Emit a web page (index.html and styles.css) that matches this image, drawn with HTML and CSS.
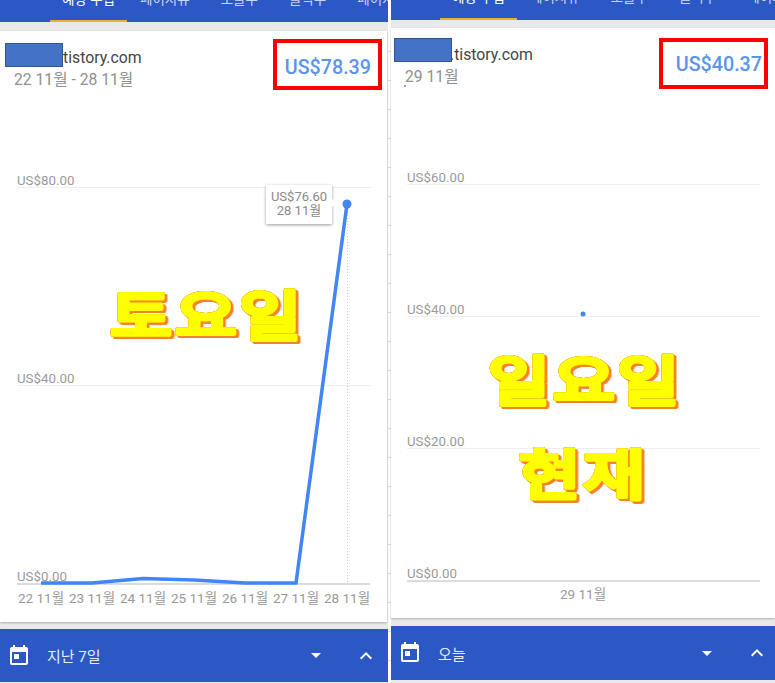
FILE: index.html
```html
<!DOCTYPE html>
<html lang="ko">
<head>
  <meta charset="UTF-8" />
  <meta name="viewport" content="width=device-width, initial-scale=1.0" />
  <title>예상 수입</title>
  <link rel="stylesheet" href="styles.css">
</head>
<body>
  <div class="screens">

    <section class="panel panel-left">
      <nav class="tabs">
        <span class="tab active">예상 수입</span>
        <span class="tab">페이지뷰</span>
        <span class="tab">노출수</span>
        <span class="tab">클릭수</span>
        <span class="tab">페이지 RPM</span>
      </nav>
      <div class="card">
        <header class="card-head">
          <div class="site">
            <div class="site-name"><span class="mask"></span><span class="domain">tistory.com</span></div>
            <div class="site-date">22 11월 - 28 11월</div>
          </div>
          <div class="amount">US$78.39</div>
        </header>
        <svg class="chart" width="387" height="591" viewBox="0 0 387 591">
          <g class="grid">
            <line x1="17" y1="156.5" x2="371" y2="156.5" />
            <line x1="17" y1="354.5" x2="371" y2="354.5" />
          </g>
          <line class="axis" x1="17" y1="553" x2="370" y2="553" />
          <line class="guide" x1="347.5" y1="175" x2="347.5" y2="552" />
          <text class="label" x="17" y="154">US$80.00</text>
          <text class="label" x="17" y="352">US$40.00</text>
          <text class="label" x="17" y="550">US$0.00</text>
          <polyline class="trend" points="41,552 92,552 143,547.5 194,549 245,552 296,552 347,173" />
          <circle class="dot" cx="347" cy="173" r="4.5" />
          <g class="dates">
            <text x="41" y="572">22 11월</text>
            <text x="92" y="572">23 11월</text>
            <text x="143" y="572">24 11월</text>
            <text x="194" y="572">25 11월</text>
            <text x="245" y="572">26 11월</text>
            <text x="296" y="572">27 11월</text>
            <text x="347" y="572">28 11월</text>
          </g>
          <text class="sticker" transform="translate(207 305) scale(1.25 1)">토요일</text>
        </svg>
        <div class="tooltip">US$76.60<br>28 11월</div>
      </div>
      <footer class="range">
        <svg class="cal" width="24" height="24" viewBox="0 0 24 24"><path d="M19 3h-1V1h-2v2H8V1H6v2H5c-1.11 0-1.99.9-1.99 2L3 19c0 1.1.89 2 2 2h14c1.1 0 2-.9 2-2V5c0-1.1-.9-2-2-2zm0 16H5V8h14v11zM7 10h5v5H7z" /></svg>
        <span class="range-text">지난 7일</span>
        <span class="caret"></span>
        <svg class="chev" width="24" height="24" viewBox="0 0 24 24"><path d="M7.4 15.4 12 10.8l4.6 4.6L18 14l-6-6-6 6z" /></svg>
      </footer>
    </section>

    <div class="gutter"></div>

    <section class="panel panel-right">
      <nav class="tabs">
        <span class="tab active">예상 수입</span>
        <span class="tab">페이지뷰</span>
        <span class="tab">노출수</span>
        <span class="tab">클릭수</span>
        <span class="tab">페이지 RPM</span>
      </nav>
      <div class="card">
        <header class="card-head">
          <div class="site">
            <div class="site-name"><span class="mask"></span><span class="domain">.tistory.com</span></div>
            <div class="site-date">29 11월</div>
          </div>
          <div class="amount">US$40.37</div>
        </header>
        <svg class="chart" width="384" height="590" viewBox="0 0 384 590">
          <g class="grid">
            <line x1="16" y1="156.5" x2="369" y2="156.5" />
            <line x1="16" y1="288.5" x2="369" y2="288.5" />
            <line x1="16" y1="420.5" x2="369" y2="420.5" />
          </g>
          <line class="axis" x1="16" y1="553" x2="369" y2="553" />
          <text class="label" x="16" y="154">US$60.00</text>
          <text class="label" x="16" y="286">US$40.00</text>
          <text class="label" x="16" y="418">US$20.00</text>
          <text class="label" x="16" y="550">US$0.00</text>
          <circle class="dot" cx="192" cy="286" r="2.5" />
          <circle class="dot" cx="14" cy="58" r="1" />
          <g class="dates">
            <text x="192" y="571">29 11월</text>
          </g>
          <text class="sticker" transform="translate(194 373) scale(1.25 1)">일요일</text>
          <text class="sticker" transform="translate(192 467) scale(1.25 1)">현재</text>
        </svg>
      </div>
      <footer class="range">
        <svg class="cal" width="24" height="24" viewBox="0 0 24 24"><path d="M19 3h-1V1h-2v2H8V1H6v2H5c-1.11 0-1.99.9-1.99 2L3 19c0 1.1.89 2 2 2h14c1.1 0 2-.9 2-2V5c0-1.1-.9-2-2-2zm0 16H5V8h14v11zM7 10h5v5H7z" /></svg>
        <span class="range-text">오늘</span>
        <span class="caret"></span>
        <svg class="chev" width="24" height="24" viewBox="0 0 24 24"><path d="M7.4 15.4 12 10.8l4.6 4.6L18 14l-6-6-6 6z" /></svg>
      </footer>
    </section>

  </div>
</body>
</html>
```

FILE: styles.css
```css
* {
  box-sizing: border-box;
}
html, body {
  margin: 0;
  height: 683px;
  overflow: hidden;
  background: #fff;
}
body {
  font-family: Roboto, "Noto Sans CJK KR", sans-serif;
  color: #444;
}
.screens {
  display: flex;
  height: 683px;
}
.panel {
  display: flex;
  flex-direction: column;
  flex: none;
  height: 683px;
  background: #e9e9e9;
}
.panel-left {
  width: 388px;
  padding-bottom: 1px;
}
.panel-right {
  width: 384px;
  padding-bottom: 3px;
}

/* strip between the two phone shots, with the ticks of the page behind */
.gutter {
  flex: none;
  width: 3px;
  height: 683px;
  background: repeating-linear-gradient(to bottom, #dcdcdc 0, #dcdcdc 1px, transparent 1px, transparent 29px) 0 51px no-repeat;
}

/* tabs, cut off by the top of the picture */
.tabs {
  display: flex;
  align-items: flex-end;
  overflow: hidden;
  background: #2b58c5;
  color: #c9d5f2;
  font-size: 13.5px;
  white-space: nowrap;
  flex: none;
}
.panel-left .tabs {
  height: 22px;
  padding-left: 50px;
}
.panel-right .tabs {
  height: 20px;
  padding-left: 49px;
}
.tab {
  height: 30px;
  margin-right: 31px;
  flex: none;
  line-height: 14px;
}
.tab.active {
  width: 77px;
  margin-right: 13px;
  color: #fff;
  text-align: center;
  border-bottom: 2px solid #e8b32c;
}

.card {
  position: relative;
  flex: none;
  background: #fff;
  box-shadow: 0 1px 2px rgba(0, 0, 0, 0.25);
}
.panel-left .card {
  width: 387px;
  height: 591px;
  margin: 9px 0 7px;
}
.panel-right .card {
  width: 384px;
  height: 590px;
  margin: 8px 0 8px;
}
.card-head {
  position: relative;
  z-index: 1;
  display: flex;
  justify-content: space-between;
}
.panel-left .card-head {
  padding: 8px 5px 0 5px;
}
.panel-right .card-head {
  padding: 10px 7px 0 3px;
}
.panel-left .site {
  padding-top: 4px;
}
.site-name {
  display: flex;
  height: 24px;
  font-size: 15.8px;
  color: #454545;
}
.mask {
  width: 58px;
  height: 24px;
  background: #4472c4;
  border: 1px solid #2f5597;
}
.domain {
  margin-top: 5px;
}
.panel-right .domain {
  margin: 7px 0 0 -2px;
}
.site-date {
  margin: 0 0 0 9px;
  font-size: 15.7px;
  color: #8f8f8f;
}
.panel-right .site-date {
  margin: 2px 0 0 11px;
}
.amount {
  width: 109px;
  height: 51px;
  border: 4px solid #f00;
  font-size: 19.7px;
  font-weight: 500;
  line-height: 50px;
  text-align: right;
  padding-right: 7px;
  color: #5a94ee;
}
.panel-right .amount {
  padding-right: 2px;
  line-height: 46px;
}

.chart {
  position: absolute;
  top: 0;
  left: 0;
}
.grid line {
  stroke: #efefef;
  stroke-width: 1;
}
.axis {
  stroke: #cfcfcf;
  stroke-width: 1.5;
}
.guide {
  stroke: #ccc;
  stroke-width: 1;
  stroke-dasharray: 1 2;
}
.label {
  font-size: 13.3px;
  fill: #9a9a9a;
}
.trend {
  fill: none;
  stroke: #4285f4;
  stroke-width: 3.5;
  stroke-linejoin: round;
}
.dot {
  fill: #4285f4;
}
.dates text {
  font-size: 13.5px;
  fill: #999;
  text-anchor: middle;
}

.tooltip {
  position: absolute;
  left: 266px;
  top: 154px;
  width: 66px;
  height: 39px;
  padding-top: 5px;
  background: #fff;
  box-shadow: 0 1px 3px rgba(0, 0, 0, 0.4);
  font-size: 13px;
  line-height: 14px;
  color: #8a8a8a;
  text-align: center;
}
.tooltip::after {
  content: "";
  position: absolute;
  right: -3px;
  top: 15px;
  width: 6px;
  height: 6px;
  background: #fff;
  transform: rotate(45deg);
}

/* big hand-made captions pasted over the charts */
.sticker {
  font-family: "Noto Sans CJK KR", sans-serif;
  font-weight: 500;
  font-size: 54px;
  letter-spacing: 2px;
  text-anchor: middle;
  fill: #ff0;
  stroke: #ff0;
  stroke-width: 4px;
  stroke-linejoin: round;
  filter: drop-shadow(0 0 0.6px #f5822a) drop-shadow(0 0 0.6px #f5822a) drop-shadow(2px 2px 0 #f5822a);
}

.range {
  display: flex;
  align-items: center;
  flex: none;
  height: 53px;
  padding: 0 10px 0 7px;
  background: #2b58c5;
  color: #e6ecfa;
  font-size: 15px;
}
.panel-right .range {
  height: 54px;
  padding: 0 6px 0 7px;
}
.cal {
  fill: #fff;
  flex: none;
}
.range-text {
  margin-left: 16px;
  flex: 1;
}
.caret {
  width: 0;
  height: 0;
  margin-right: 33px;
  border-left: 5px solid transparent;
  border-right: 5px solid transparent;
  border-top: 5px solid #fff;
}
.chev {
  fill: #fff;
  flex: none;
}
```
